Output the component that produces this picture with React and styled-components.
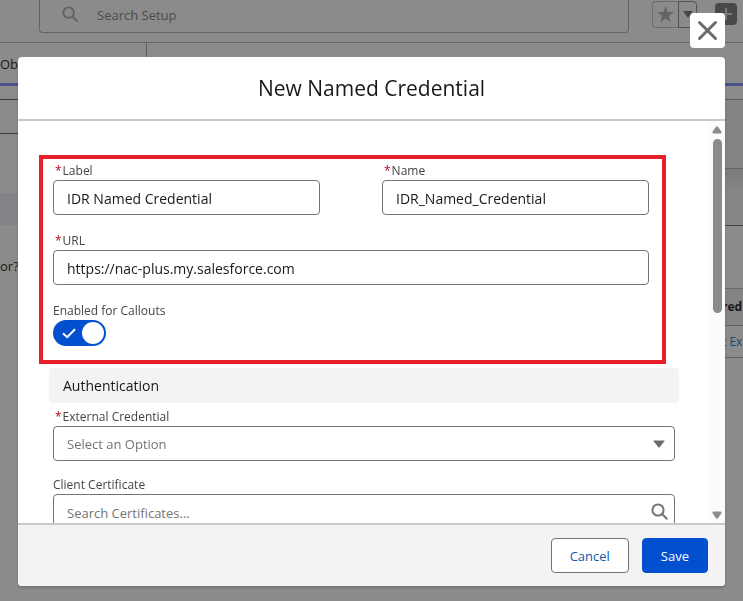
import styled, { createGlobalStyle } from "styled-components";
import { useState } from "react";

const App=()=>{
  const [label,setLabel]=useState("IDR Named Credential");
  const [name,setName]=useState("IDR_Named_Credential");
  const [url,setUrl]=useState("https://nac-plus.my.salesforce.com");
  const [callouts,setCallouts]=useState(true);

  return ( <>
    <GlobalStyle/>
    <SetupPage/>
    <Backdrop>
      <CloseButton type="button" aria-label="Close">
        <svg width="21" height="21" viewBox="0 0 21 21" fill="none" stroke="#6b6b6b" strokeWidth="3" strokeLinecap="round">
          <path d="M2.5 2.5 18.5 18.5M18.5 2.5 2.5 18.5"/>
        </svg>
      </CloseButton>
      <Modal role="dialog" aria-labelledby="modal-title">
        <ModalHeader>
          <Title id="modal-title">New Named Credential</Title>
        </ModalHeader>
        <ModalBody>
          <Form>
            <Highlight>
              <TwoColumns>
                <Field id="label" label="Label" required>
                  <TextInput id="label" value={label} onChange={(e)=>setLabel(e.target.value)}/>
                </Field>
                <Field id="name" label="Name" required>
                  <TextInput id="name" value={name} onChange={(e)=>setName(e.target.value)}/>
                </Field>
              </TwoColumns>
              <Field id="url" label="URL" required>
                <TextInput id="url" value={url} onChange={(e)=>setUrl(e.target.value)}/>
              </Field>
              <Field id="callouts" label="Enabled for Callouts">
                <ToggleWrap>
                  <Toggle id="callouts" type="checkbox" checked={callouts} onChange={(e)=>setCallouts(e.target.checked)}/>
                  {callouts && <svg width="14" height="11" viewBox="0 0 14 11" fill="none" stroke="#ffffff" strokeWidth="2">
                    <path d="M1 5.2 5.2 9.2 13 1.2"/>
                  </svg>}
                </ToggleWrap>
              </Field>
            </Highlight>
            <SectionTitle>Authentication</SectionTitle>
            <Section>
              <Field id="external" label="External Credential" required>
                <Control>
                  <Select id="external" defaultValue="">
                    <option value="">Select an Option</option>
                  </Select>
                  <svg width="12" height="8" viewBox="0 0 12 8" fill="#6b6b6b">
                    <path d="M1 .5h10q.8 0 .4.7L6.6 7.2q-.6.6-1.2 0L.6 1.2Q.2.5 1 .5Z"/>
                  </svg>
                </Control>
              </Field>
              <Field id="certificate" label="Client Certificate">
                <Control>
                  <TextInput id="certificate" placeholder="Search Certificates..."/>
                  <SearchIcon color="#747474" size={17}/>
                </Control>
              </Field>
            </Section>
          </Form>
          <ScrollBar/>
        </ModalBody>
        <ModalFooter>
          <Button type="button">Cancel</Button>
          <Button type="button" $brand>Save</Button>
        </ModalFooter>
      </Modal>
    </Backdrop>
  </> )
}
export default App;

const Field=({id,label,required,children})=>{
  return ( <FieldBox>
    <Label htmlFor={id}>
      {required && <Required>*</Required>}{label}
    </Label>
    {children}
  </FieldBox> )
}

const SearchIcon=({color,size})=>{
  return ( <svg width={size} height={size} viewBox="0 0 17 17" fill="none" stroke={color} strokeWidth="2">
    <circle cx="7" cy="7" r="5.6"/>
    <path d="M11 11 15.8 15.8" strokeLinecap="round"/>
  </svg> )
}

const ScrollBar=()=>{
  return ( <Track aria-hidden="true">
    <svg width="10" height="8" viewBox="0 0 10 8" fill="#8b8b8b">
      <path d="M4 .8Q5-.4 6 .8L9.3 5.6Q10 7.5 8.4 7.5H1.6Q0 7.5.7 5.6Z"/>
    </svg>
    <Thumb/>
    <svg width="10" height="8" viewBox="0 0 10 8" fill="#8b8b8b">
      <path d="M4 7.2Q5 8.4 6 7.2L9.3 2.4Q10 .5 8.4 .5H1.6Q0 .5.7 2.4Z"/>
    </svg>
  </Track> )
}

const SetupPage=()=>{
  return ( <Page>
    <TopBar>
      <GlobalSearch>
        <SearchIcon color="#a8a8a8" size={16}/>
        <input aria-label="Search Setup" placeholder="Search Setup"/>
      </GlobalSearch>
      <Favorites>
        <button type="button" aria-label="Favorite">
          <svg width="17" height="17" viewBox="0 0 17 17" fill="#b0b0b0">
            <path d="M8.5 0 10.6 6H17L11.9 9.9 13.8 16.4 8.5 12.6 3.2 16.4 5.1 9.9 0 6H6.4Z"/>
          </svg>
        </button>
        <button type="button" aria-label="Favorites list">
          <svg width="10" height="7" viewBox="0 0 10 7" fill="#727272"><path d="M0 0H10L5 7Z"/></svg>
        </button>
      </Favorites>
      <AddButton type="button" aria-label="Add">
        <svg width="14" height="14" viewBox="0 0 14 14" stroke="#dddddd" strokeWidth="2"><path d="M7 1V13M1 7H13"/></svg>
      </AddButton>
    </TopBar>
    <TabBar>
      <Tab>Ob</Tab>
    </TabBar>
    <Columns>
      <SideNav>
        <NavLine/>
        <NavSelected/>
        <NavText>or?</NavText>
      </SideNav>
      <Details>
        <PageHead/>
        <CardHead/>
        <CardSpace/>
        <Cell $head>red</Cell>
        <Cell><a href="#ext">t Ex</a></Cell>
      </Details>
    </Columns>
  </Page> )
}

const GlobalStyle=createGlobalStyle`
  *{
    box-sizing: border-box;
  }
  body{
    margin: 0;
    overflow: hidden;
    background-color: #ffffff;
    color: #181818;
    font-family: "Open Sans", "Noto Sans", sans-serif;
    font-size: 13px;
  }
  input, select, button{
    font-family: inherit;
    font-size: inherit;
  }
  svg{
    display: block;
    flex-shrink: 0;
  }
`;

const Page=styled.div`
  height: 100vh;
  display: flex;
  flex-direction: column;
  overflow: hidden;
`;

const TopBar=styled.header`
  display: flex;
  align-items: flex-start;
  height: 43px;
  flex-shrink: 0;
  padding: 0 6px 0 39px;
  border-bottom: 1px solid #b4b4b4;
`;

const GlobalSearch=styled.div`
  flex: 1;
  display: flex;
  align-items: center;
  gap: 19px;
  height: 33px;
  margin-right: 23px;
  padding: 0 22px 4px;
  border: 1px solid #b0b0b0;
  border-top: none;
  border-radius: 0 0 4px 4px;
  input{
    flex: 1;
    border: none;
    padding: 2px 0 0;
    background: none;
    outline: none;
    &::placeholder{
      color: #808080;
    }
  }
`;

const Favorites=styled.div`
  display: flex;
  width: 45px;
  height: 27px;
  margin: 1px 18px 0 0;
  button{
    display: flex;
    align-items: center;
    justify-content: center;
    padding: 0;
    background: none;
    border: 1px solid #c4c4c4;
  }
  button:first-child{
    flex: 1;
    border-right: none;
    border-radius: 4px 0 0 4px;
  }
  button:last-child{
    width: 19px;
    border-color: #8c8c8c;
    border-radius: 0 4px 4px 0;
  }
`;

const AddButton=styled.button`
  display: flex;
  align-items: center;
  justify-content: center;
  width: 22px;
  height: 22px;
  margin-top: 3px;
  padding: 0;
  border: none;
  border-radius: 4px;
  background-color: #7a7a7a;
`;

const TabBar=styled.nav`
  height: 43px;
  flex-shrink: 0;
  border-bottom: 3px solid #8090ff;
`;

const Tab=styled.div`
  width: 147px;
  height: 40px;
  line-height: 42px;
  border-right: 1px solid #a0a0a0;
`;

const Columns=styled.div`
  flex: 1;
  display: flex;
  justify-content: space-between;
`;

const SideNav=styled.aside`
  width: 40%;
  padding-top: 13px;
`;

const NavLine=styled.div`
  height: 35px;
  border-top: 1px solid #5c5c5c;
  border-bottom: 1px solid #5c5c5c;
`;

const NavSelected=styled.div`
  height: 32px;
  margin-top: 59px;
  background-color: #eeeffd;
`;

const NavText=styled.p`
  margin: 30px 0 0;
  line-height: 22px;
`;

const Details=styled.main`
  width: 22px;
  padding-top: 13px;
  overflow: hidden;
  white-space: nowrap;
  font-size: 12px;
`;

const PageHead=styled.div`
  height: 70px;
  border-top: 1px solid #a8a8a8;
  border-bottom: 1px solid #b4b4b4;
  background-color: #f0f0f0;
`;

const CardHead=styled.div`
  height: 57px;
  border-bottom: 1px solid #6c6c6c;
  background: linear-gradient(#dedede, #f4f4f4 20px);
`;

const CardSpace=styled.div`
  height: 63px;
  border-bottom: 1px solid #b8b8b8;
`;

const Cell=styled.div`
  height: ${({$head})=>$head ? "37px":"32px"};
  line-height: ${({$head})=>$head ? "36px":"31px"};
  padding-left: 1px;
  font-weight: ${({$head})=>$head ? "700":"400"};
  background-color: ${({$head})=>$head ? "#f0f0f0":"#ffffff"};
  border-bottom: 1px solid #a8a8a8;
  a{
    color: #0b80d8;
    text-decoration: none;
  }
`;

const Backdrop=styled.div`
  position: fixed;
  inset: 0;
  display: flex;
  flex-direction: column;
  gap: 9px;
  padding: 13px 18px 15px;
  background-color: rgba(24, 24, 24, 0.5);
`;

const CloseButton=styled.button`
  align-self: flex-end;
  display: flex;
  align-items: center;
  justify-content: center;
  width: 35px;
  height: 35px;
  flex-shrink: 0;
  padding: 0;
  border: none;
  border-radius: 4px;
  background-color: #ffffff;
  cursor: pointer;
`;

const Modal=styled.section`
  flex: 1;
  min-height: 0;
  display: flex;
  flex-direction: column;
  border-radius: 4px;
  overflow: hidden;
  background-color: #ffffff;
  box-shadow: 0 2px 3px rgba(0, 0, 0, 0.16);
`;

const ModalHeader=styled.header`
  padding: 16px;
  border-bottom: 2px solid #c9c9c9;
  text-align: center;
`;

const Title=styled.h1`
  margin: 0;
  font-size: 21px;
  line-height: 30px;
  font-weight: 400;
`;

const ModalBody=styled.div`
  flex: 1;
  min-height: 0;
  display: flex;
`;

const Form=styled.form`
  flex: 1;
  overflow: hidden;
  padding: 34px 30px 0 21px;
`;

const Highlight=styled.div`
  display: flex;
  flex-direction: column;
  gap: 14px;
  margin-right: 13px;
  padding: 0 13px 14px 10px;
  border: 4px solid #e81e29;
`;

const TwoColumns=styled.div`
  display: grid;
  grid-template-columns: 1fr 1fr;
  gap: 62px;
`;

const Section=styled.div`
  display: flex;
  flex-direction: column;
  gap: 12px;
  margin-left: 10px;
  padding: 2px 4px 0;
`;

const SectionTitle=styled.h2`
  margin: 4px 0 0 10px;
  padding: 1px 14px 0;
  font-size: 14px;
  line-height: 34px;
  font-weight: 400;
  border-radius: 4px;
  background-color: #f3f3f3;
`;

const FieldBox=styled.div`
  display: flex;
  flex-direction: column;
  min-width: 0;
`;

const Label=styled.label`
  padding-top: 3px;
  font-size: 12px;
  line-height: 18px;
  color: #444444;
`;

const Required=styled.abbr`
  margin: 0 1px 0 2px;
  color: #ba0517;
`;

const TextInput=styled.input`
  width: 100%;
  height: 35px;
  padding: 1px 13px 0;
  border: 1px solid #747474;
  border-radius: 4px;
  background-color: #ffffff;
  color: #181818;
  font-size: 14px;
  &::placeholder{
    color: #747474;
    font-size: 13px;
  }
`;

const Control=styled.div`
  position: relative;
  display: flex;
  align-items: center;
  svg{
    position: absolute;
    right: 7px;
    pointer-events: none;
  }
  select + svg{
    right: 10px;
  }
`;

const Select=styled.select`
  appearance: none;
  width: 100%;
  height: 35px;
  padding: 1px 13px 0;
  border: 1px solid #747474;
  border-radius: 4px;
  background-color: #ffffff;
  color: #747474;
`;

const ToggleWrap=styled.div`
  position: relative;
  width: 53px;
  height: 26px;
  svg{
    position: absolute;
    left: 9px;
    top: 8px;
    pointer-events: none;
  }
`;

const Toggle=styled.input`
  appearance: none;
  display: flex;
  align-items: center;
  justify-content: flex-start;
  width: 53px;
  height: 26px;
  margin: 0;
  padding: 0 2px;
  border-radius: 13px;
  background-color: #747474;
  cursor: pointer;
  &::before{
    content: "";
    width: 22px;
    height: 22px;
    border-radius: 50%;
    background-color: #ffffff;
  }
  &:checked{
    justify-content: flex-end;
    background-color: #0250d0;
  }
`;

const Track=styled.div`
  display: flex;
  flex-direction: column;
  align-items: center;
  width: 16px;
  padding: 5px 0 4px;
  background-color: #fcfcfc;
`;

const Thumb=styled.div`
  width: 9px;
  height: 174px;
  margin: 5px 0 auto;
  border-radius: 5px;
  background-color: #8b8b8b;
`;

const ModalFooter=styled.footer`
  display: flex;
  justify-content: flex-end;
  gap: 13px;
  padding: 13px 17px;
  border-top: 2px solid #c9c9c9;
  background-color: #f3f3f3;
`;

const Button=styled.button`
  height: 35px;
  padding: 0 18px;
  border: 1px solid ${({$brand})=>$brand ? "#0250d0":"#747474"};
  border-radius: 4px;
  background-color: ${({$brand})=>$brand ? "#0250d0":"#ffffff"};
  color: ${({$brand})=>$brand ? "#ffffff":"#0b5cab"};
  cursor: pointer;
`;
